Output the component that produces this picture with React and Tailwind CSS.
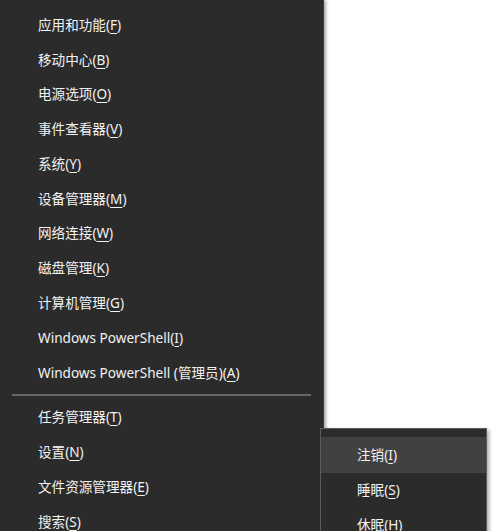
import React from "react";

const font = { fontFamily: '"Noto Sans", "Noto Sans CJK SC", sans-serif' };

function Label({ text, k }) {
  return (
    <span>
      {text}(<span className="underline underline-offset-[3px] decoration-1">{k}</span>)
    </span>
  );
}

const top = [
  ["应用和功能", "F"],
  ["移动中心", "B"],
  ["电源选项", "O"],
  ["事件查看器", "V"],
  ["系统", "Y"],
  ["设备管理器", "M"],
  ["网络连接", "W"],
  ["磁盘管理", "K"],
  ["计算机管理", "G"],
  ["Windows PowerShell", "I"],
  ["Windows PowerShell (管理员)", "A"],
];
const bottom = [
  ["任务管理器", "T"],
  ["设置", "N"],
  ["文件资源管理器", "E"],
  ["搜索", "S"],
];

export default function App() {
  return (
    <div className="relative w-[500px] h-[531px] bg-white overflow-hidden" style={font}>
      <div className="w-[324px] h-full bg-[#2b2b2b] border-r border-[#3c3c3c] shadow-[2px_0_3px_rgba(0,0,0,0.35)] pt-[7.5px] text-[13.6px] text-[#f2f2f2]">
        {top.map(([t, k]) => (
          <div key={t + k} className="h-[34.8px] flex items-center pl-[38px]">
            <Label text={t} k={k} />
          </div>
        ))}
        <div className="h-[10px] flex items-center px-[12px]">
          <div className="h-[2px] w-full bg-[#666666]" />
        </div>
        {bottom.map(([t, k]) => (
          <div key={t + k} className="h-[34.8px] flex items-center pl-[38px]">
            <Label text={t} k={k} />
          </div>
        ))}
      </div>
      <div className="absolute left-[320px] top-[428px] w-[167px] h-[120px] bg-[#2b2b2b] border border-[#5c5c5c] shadow-[2px_2px_4px_rgba(0,0,0,0.35)] pt-[8px] text-[13.6px] text-[#f2f2f2]">
        <div className="h-[36px] flex items-center pl-[36px] bg-[#414141]">
          <Label text="注销" k="I" />
        </div>
        <div className="h-[35px] flex items-center pl-[36px]">
          <Label text="睡眠" k="S" />
        </div>
        <div className="h-[35px] flex items-center pl-[36px]">
          <Label text="休眠" k="H" />
        </div>
      </div>
    </div>
  );
}
